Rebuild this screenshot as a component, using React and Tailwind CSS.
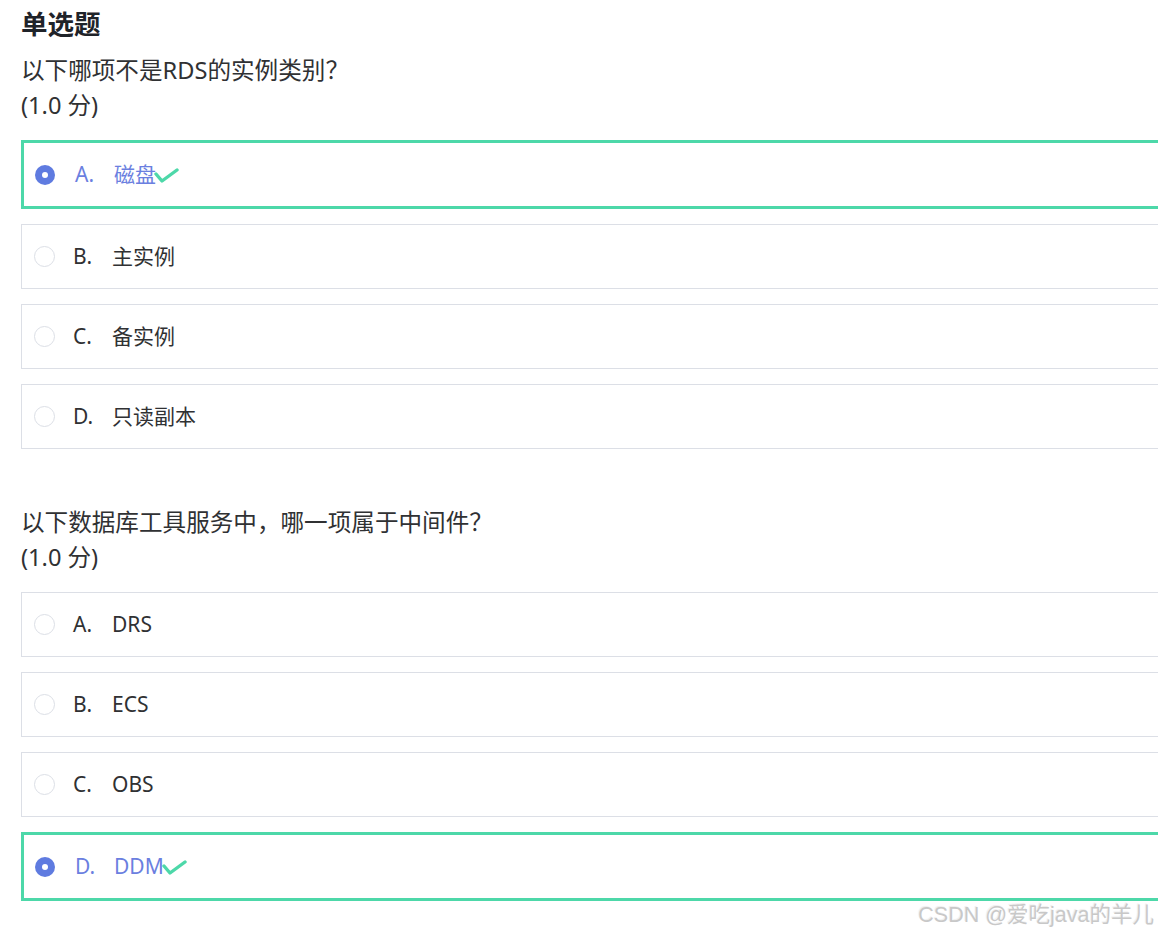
import React from 'react';

const questions = [
  {
    text: '以下哪项不是RDS的实例类别？',
    score: '(1.0 分)',
    options: [
      { key: 'A.', label: '磁盘', picked: true },
      { key: 'B.', label: '主实例' },
      { key: 'C.', label: '备实例' },
      { key: 'D.', label: '只读副本' },
    ],
  },
  {
    text: '以下数据库工具服务中，哪一项属于中间件？',
    score: '(1.0 分)',
    options: [
      { key: 'A.', label: 'DRS' },
      { key: 'B.', label: 'ECS' },
      { key: 'C.', label: 'OBS' },
      { key: 'D.', label: 'DDM', picked: true },
    ],
  },
];

const Check = () => (
  <svg width="26" height="16" viewBox="0 0 26 16" className="-ml-[2px] mt-[2px]">
    <polyline points="2,6 8,13 23,2" fill="none" stroke="#4dd8a9" strokeWidth="3.4" strokeLinecap="round" strokeLinejoin="round" />
  </svg>
);

const Option = ({ opt }) => {
  if (opt.picked) {
    return (
      <div className="flex items-center h-[69px] w-[1160px] border-[3px] border-[#4dd8a9] pl-[11px] text-[#6b7fe0]">
        <span className="w-[20px] h-[20px] rounded-full bg-[#5f7be0] flex items-center justify-center">
          <span className="w-[6px] h-[6px] rounded-full bg-white" />
        </span>
        <span className="ml-[20px] w-[39px]">{opt.key}</span>
        <span>{opt.label}</span>
        <Check />
      </div>
    );
  }
  return (
    <div className="flex items-center h-[65px] w-[1160px] border border-[#dcdfe6] pl-[12px] text-[#303133]">
      <span className="w-[21px] h-[21px] rounded-full border border-[#dcdfe6] bg-white" />
      <span className="ml-[18px] w-[39px]">{opt.key}</span>
      <span>{opt.label}</span>
    </div>
  );
};

export default function App() {
  return (
    <div
      className="relative w-[1158px] h-[936px] overflow-hidden bg-white pl-[21px]"
      style={{ fontFamily: '"Noto Sans", "Noto Sans CJK SC", sans-serif' }}
    >
      <h1 className="pt-[6px] text-[26.5px] leading-[36px] font-bold text-[#1f2329]">单选题</h1>

      {questions.map((q, i) => (
        <section key={i} className={i === 0 ? 'mt-[11px]' : 'mt-[56px]'}>
          <div className="text-[23.6px] leading-[35px] text-[#303133]">
            <p>{q.text}</p>
            <p>{q.score}</p>
          </div>
          <div className="mt-[17px] flex flex-col gap-[15px] text-[21px]">
            {q.options.map((o) => (
              <Option key={o.key} opt={o} />
            ))}
          </div>
        </section>
      ))}

      {/* watermark */}
      <div
        className="absolute right-[4px] bottom-[5px] text-[21.5px] text-[#c8c8c8]"
        style={{ fontFamily: '"Liberation Sans", "Noto Sans CJK SC", sans-serif', textShadow: '1px 1px 1px #fff, -1px -1px 1px #eee' }}
      >
        CSDN @爱吃java的羊儿
      </div>
    </div>
  );
}
